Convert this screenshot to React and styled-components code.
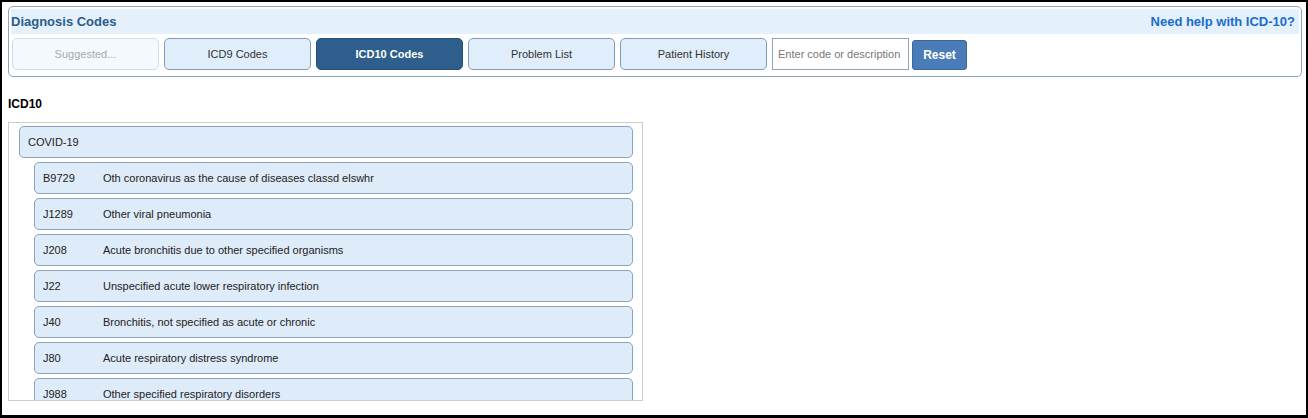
import React from 'react';
import styled, { createGlobalStyle } from 'styled-components';

const GlobalStyle = createGlobalStyle`
  html, body {
    margin: 0;
    padding: 0;
    background: #000;
  }
  body {
    font-family: "Liberation Sans", Arial, sans-serif;
  }
`;

const Frame = styled.div`
  margin: 2px 2px 0 2px;
  height: 413px;
  background: #fff;
  padding: 4px 4px 0 6px;
  box-sizing: border-box;
  overflow: hidden;
`;

const Panel = styled.div`
  border: 1px solid #8fa5bf;
  border-radius: 5px;
  padding: 2px 2px 6px 2px;
`;

const HeaderBand = styled.div`
  display: flex;
  align-items: center;
  justify-content: space-between;
  height: 25px;
  background: #e4f1fd;
  padding: 0 4px 0 0;
`;

const Title = styled.div`
  font-size: 13px;
  font-weight: bold;
  color: #2d5c8c;
`;

const HelpLink = styled.a`
  font-size: 13px;
  font-weight: bold;
  color: #1a6bcc;
  text-decoration: none;
  cursor: pointer;
`;

const Toolbar = styled.div`
  display: flex;
  align-items: flex-start;
  gap: 5px;
  margin-top: 4px;
  padding-left: 1px;
`;

const TabButton = styled.button`
  width: 147px;
  height: 32px;
  box-sizing: border-box;
  border-radius: 5px;
  font-family: inherit;
  font-size: 11px;
  cursor: pointer;
  border: 1px solid ${p => (p.$disabled ? '#cfdcea' : p.$active ? '#264f77' : '#7f9aba')};
  background: ${p => (p.$disabled ? '#f4f9fe' : p.$active ? '#2e5e8b' : '#e0edfa')};
  color: ${p => (p.$disabled ? '#aaaaaa' : p.$active ? '#fff' : '#333')};
  font-weight: ${p => (p.$active ? 'bold' : 'normal')};
`;

const SearchInput = styled.input`
  width: 137px;
  height: 32px;
  box-sizing: border-box;
  border: 1px solid #8ea4bd;
  padding: 0 5px;
  font-family: inherit;
  font-size: 11px;
  outline: none;
  &::placeholder {
    color: #777;
  }
`;

const ResetButton = styled.button`
  width: 55px;
  height: 30px;
  margin-top: 2px;
  margin-left: -2px;
  box-sizing: border-box;
  background: #4a7db8;
  border: 1px solid #3a689e;
  border-radius: 3px;
  color: #fff;
  font-family: inherit;
  font-size: 12px;
  font-weight: bold;
  cursor: pointer;
`;

const SectionLabel = styled.div`
  margin-top: 19px;
  font-size: 12px;
  font-weight: bold;
  line-height: 16px;
  color: #000;
`;

const ListBox = styled.div`
  margin-top: 10px;
  width: 635px;
  height: 279px;
  box-sizing: border-box;
  border: 1px solid #cccccc;
  padding: 3px 9px 0 10px;
  overflow: hidden;
  display: flex;
  flex-direction: column;
  gap: 4px;
`;

const Row = styled.div`
  display: flex;
  align-items: center;
  flex-shrink: 0;
  height: 32px;
  box-sizing: border-box;
  margin-left: ${p => (p.$indent ? '15px' : '0')};
  padding-left: 8px;
  background: #deebf9;
  border: 1px solid #8aa3c2;
  border-radius: 5px;
  font-size: 11px;
  color: #222;
  cursor: pointer;
`;

const Code = styled.span`
  width: 60px;
`;

const tabs = [
  { label: 'Suggested...', disabled: true },
  { label: 'ICD9 Codes' },
  { label: 'ICD10 Codes', active: true },
  { label: 'Problem List' },
  { label: 'Patient History' },
];

const codes = [
  ['B9729', 'Oth coronavirus as the cause of diseases classd elswhr'],
  ['J1289', 'Other viral pneumonia'],
  ['J208', 'Acute bronchitis due to other specified organisms'],
  ['J22', 'Unspecified acute lower respiratory infection'],
  ['J40', 'Bronchitis, not specified as acute or chronic'],
  ['J80', 'Acute respiratory distress syndrome'],
  ['J988', 'Other specified respiratory disorders'],
];

export default function App() {
  return (
    <>
      <GlobalStyle />
      <Frame>
        <Panel>
          <HeaderBand>
            <Title>Diagnosis Codes</Title>
            <HelpLink>Need help with ICD-10?</HelpLink>
          </HeaderBand>
          <Toolbar>
            {tabs.map(t => (
              <TabButton key={t.label} $active={t.active} $disabled={t.disabled}>
                {t.label}
              </TabButton>
            ))}
            <SearchInput placeholder="Enter code or description" />
            <ResetButton>Reset</ResetButton>
          </Toolbar>
        </Panel>
        <SectionLabel>ICD10</SectionLabel>
        <ListBox>
          <Row>COVID-19</Row>
          {codes.map(([code, desc]) => (
            <Row key={code} $indent>
              <Code>{code}</Code>
              <span>{desc}</span>
            </Row>
          ))}
        </ListBox>
      </Frame>
    </>
  );
}
